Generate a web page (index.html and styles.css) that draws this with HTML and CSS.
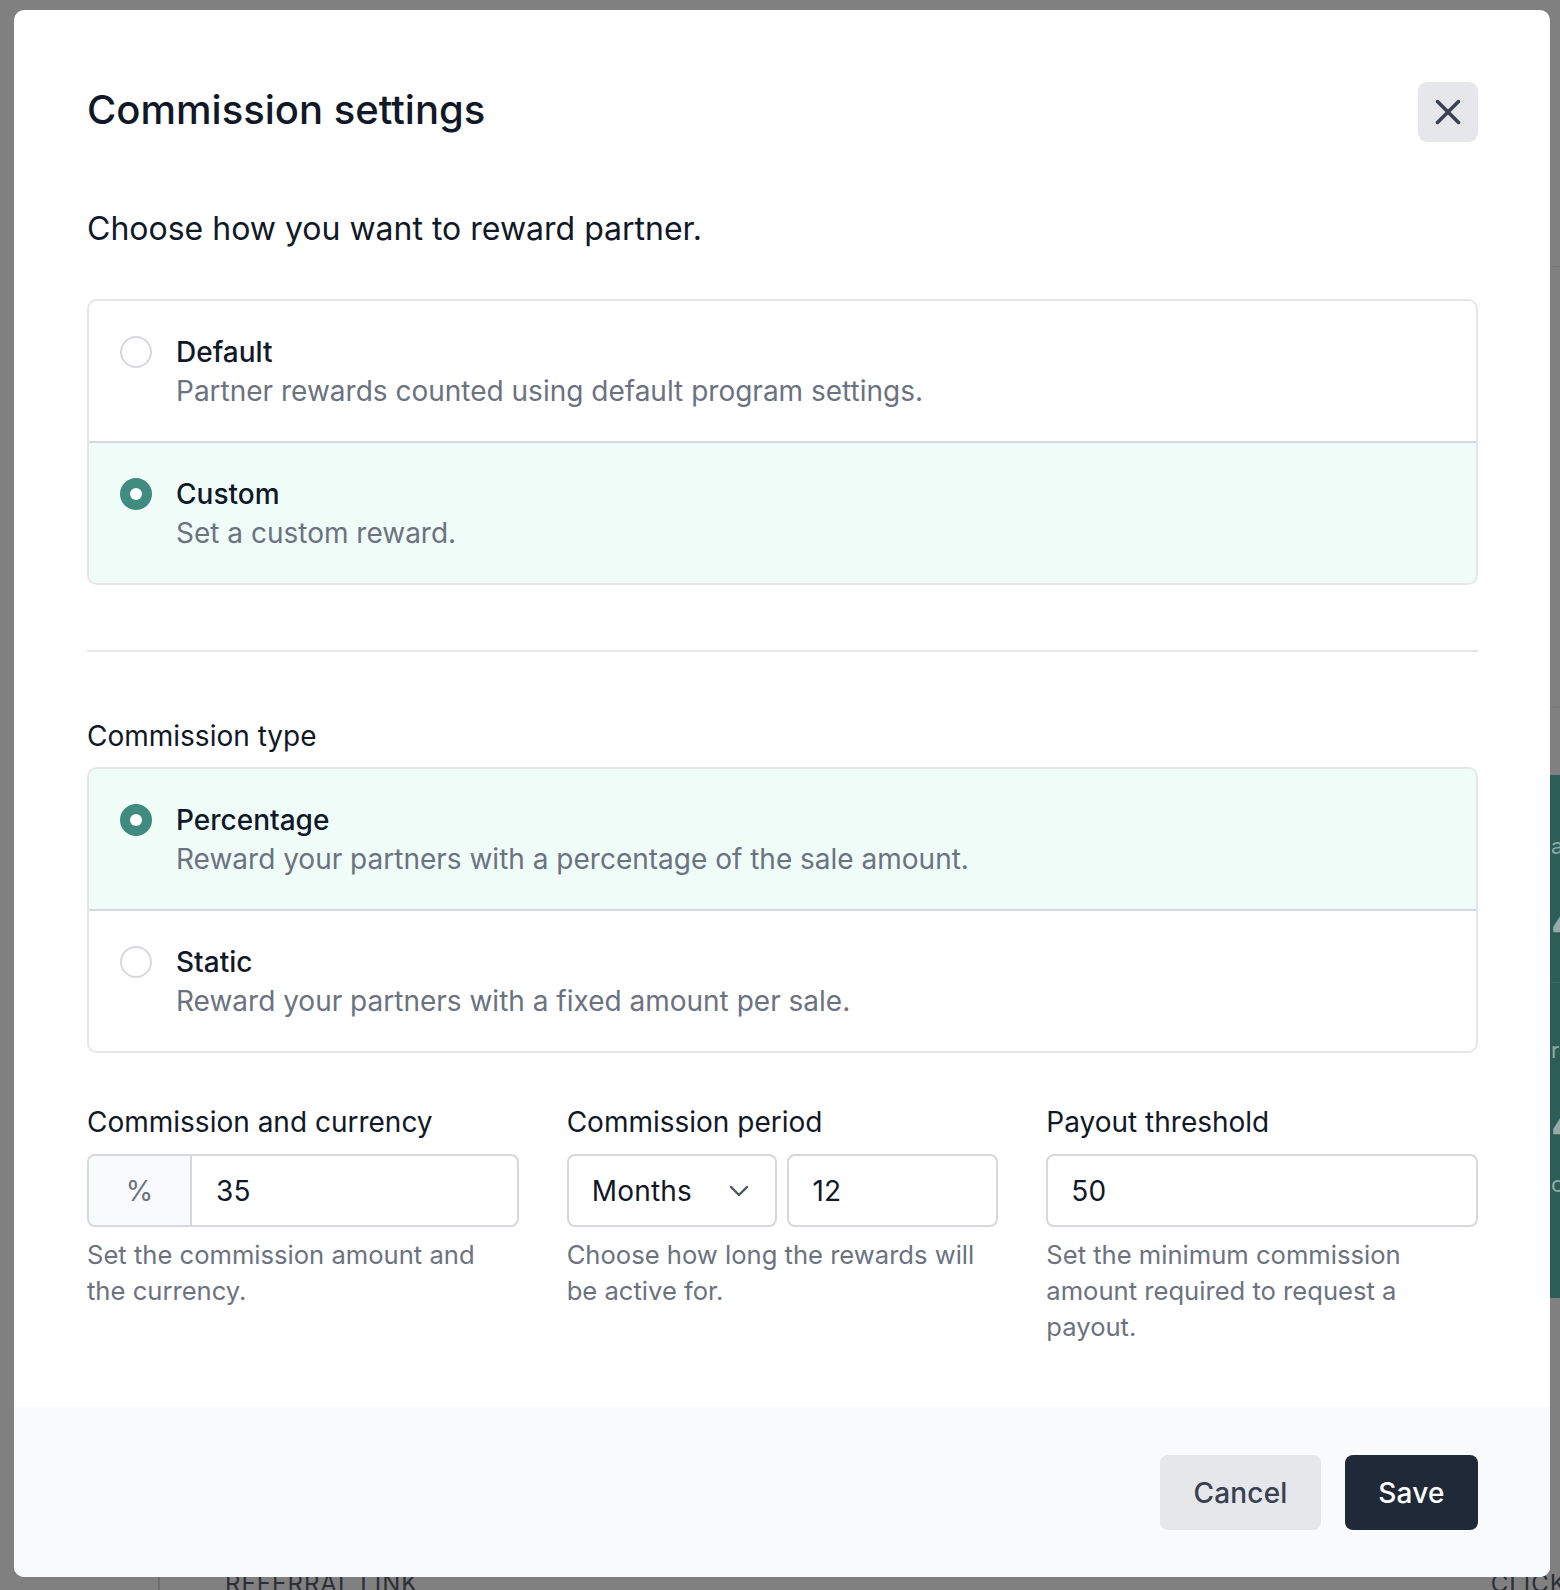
FILE: index.html
```html
<!DOCTYPE html>
<html lang="en">
<head>
<meta charset="utf-8">
<title>Commission settings</title>
<link rel="stylesheet" href="styles.css">
</head>
<body>
<div class="app">
  <main class="app-main">
    <div class="ref-head">
      <span class="ref-col">Referral link</span>
      <span class="ref-col ref-click">Clicks</span>
    </div>
  </main>
  <aside class="app-aside">
    <div class="aside-line aside-line-1"></div>
    <div class="aside-line aside-line-2"></div>
    <div class="stat-card">
      <div class="stat-label">avg</div>
      <div class="stat-value">4</div>
      <div class="stat-sep"></div>
      <div class="stat-label stat-label-2">rr</div>
      <div class="stat-value stat-value-2">4</div>
      <div class="stat-label stat-label-3">c</div>
    </div>
  </aside>
</div>

<div class="overlay">
  <div class="modal" role="dialog" aria-labelledby="modal-title">
    <div class="modal-body">
      <header class="modal-header">
        <h2 class="modal-title" id="modal-title">Commission settings</h2>
        <button class="close-btn" type="button" aria-label="Close">
          <svg width="26" height="26" viewBox="0 0 26 26" fill="none" stroke="#374151" stroke-width="3.5" stroke-linecap="round">
            <path d="M2.5 2.5 L23.5 23.5"/>
            <path d="M23.5 2.5 L2.5 23.5"/>
          </svg>
        </button>
      </header>

      <p class="intro">Choose how you want to reward partner.</p>

      <div class="choice-group">
        <div class="choice">
          <span class="radio"></span>
          <div class="choice-text">
            <div class="choice-title">Default</div>
            <div class="choice-desc">Partner rewards counted using default program settings.</div>
          </div>
        </div>
        <div class="choice is-selected">
          <span class="radio"></span>
          <div class="choice-text">
            <div class="choice-title">Custom</div>
            <div class="choice-desc">Set a custom reward.</div>
          </div>
        </div>
      </div>

      <hr class="divider">

      <div class="section-label">Commission type</div>

      <div class="choice-group choice-group-type">
        <div class="choice is-selected">
          <span class="radio"></span>
          <div class="choice-text">
            <div class="choice-title">Percentage</div>
            <div class="choice-desc">Reward your partners with a percentage of the sale amount.</div>
          </div>
        </div>
        <div class="choice">
          <span class="radio"></span>
          <div class="choice-text">
            <div class="choice-title">Static</div>
            <div class="choice-desc">Reward your partners with a fixed amount per sale.</div>
          </div>
        </div>
      </div>

      <div class="fields">
        <div class="field">
          <div class="field-label">Commission and currency</div>
          <div class="input input-prefixed">
            <span class="prefix">%</span>
            <span class="input-value">35</span>
          </div>
          <div class="field-help">Set the commission amount and the currency.</div>
        </div>
        <div class="field">
          <div class="field-label">Commission period</div>
          <div class="pair">
            <div class="input select">
              <span class="input-value">Months</span>
              <svg class="chevron" width="20" height="12" viewBox="0 0 20 12" fill="none" stroke="#4b5563" stroke-width="2.4" stroke-linecap="round" stroke-linejoin="round">
                <path d="M2 2 L10 10 L18 2"/>
              </svg>
            </div>
            <div class="input">
              <span class="input-value">12</span>
            </div>
          </div>
          <div class="field-help">Choose how long the rewards will be active for.</div>
        </div>
        <div class="field">
          <div class="field-label">Payout threshold</div>
          <div class="input">
            <span class="input-value">50</span>
          </div>
          <div class="field-help">Set the minimum commission amount required to request a payout.</div>
        </div>
      </div>
    </div>

    <footer class="modal-footer">
      <button class="btn btn-secondary" type="button">Cancel</button>
      <button class="btn btn-primary" type="button">Save</button>
    </footer>
  </div>
</div>
</body>
</html>
```

FILE: styles.css
```css
* {
  box-sizing: border-box;
}

html, body {
  margin: 0;
  padding: 0;
}

body {
  width: 1560px;
  height: 1590px;
  overflow: hidden;
  position: relative;
  background: #808080;
  font-family: Inter, "Noto Sans", sans-serif;
  color: #111827;
}

.app {
  display: flex;
  width: 1560px;
  height: 1590px;
  overflow: hidden;
}

.app-main {
  flex: 0 0 1550px;
  display: flex;
  flex-direction: column;
  justify-content: flex-end;
}

.ref-head {
  display: flex;
  justify-content: space-between;
  margin-left: 158px;
  height: 24px;
  border-left: 2px solid #6e6e6e;
  padding-left: 65px;
  margin-bottom: -6px;
}

.ref-col {
  font-size: 24px;
  line-height: 24px;
  letter-spacing: 1px;
  text-transform: uppercase;
  color: #2b2f36;
}

.ref-click {
  margin-right: -33px;
}

.app-aside {
  flex: 1 0 auto;
  min-width: 0;
  overflow: hidden;
  display: flex;
  flex-direction: column;
}

.aside-line {
  height: 1px;
  background: #767676;
  width: 200px;
}

.aside-line-1 {
  margin-top: 266px;
}

.aside-line-2 {
  margin-top: 440px;
}

.stat-card {
  margin-top: 67px;
  height: 523px;
  width: 300px;
  background: #2d5e56;
  padding-left: 1px;
  display: flex;
  flex-direction: column;
  color: #8ea9a2;
}

.stat-label {
  font-size: 22px;
  line-height: 30px;
  margin-top: 56px;
}

.stat-value {
  font-size: 44px;
  line-height: 50px;
  font-weight: 700;
  color: #9aa9a6;
  margin-top: 36px;
}

.stat-sep {
  height: 1px;
  background: #3d6b64;
  margin-top: 35px;
}

.stat-label-2 {
  margin-top: 52px;
}

.stat-value-2 {
  margin-top: 34px;
}

.stat-label-3 {
  margin-top: 20px;
}

/* ---------- overlay + modal ---------- */
.overlay {
  position: absolute;
  inset: 0;
  padding: 10px 0 0 14px;
}

.modal {
  width: 1536px;
  height: 1567px;
  background: #ffffff;
  border-radius: 10px;
  overflow: hidden;
  display: flex;
  flex-direction: column;
}

.modal-body {
  padding: 72px 72px 62px 73px;
  flex: 1 0 auto;
}

.modal-header {
  display: flex;
  justify-content: space-between;
  align-items: flex-start;
  height: 60px;
}

.modal-title {
  margin: -2px 0 0 0;
  font-size: 40px;
  line-height: 60px;
  font-weight: 500;
  color: #111827;
  letter-spacing: 0;
}

.close-btn {
  width: 60px;
  height: 60px;
  border: none;
  border-radius: 9px;
  background: #e5e7eb;
  display: flex;
  align-items: center;
  justify-content: center;
  padding: 0;
  margin-right: 0;
}

.intro {
  margin: 63px 0 0 0;
  font-size: 32px;
  line-height: 48px;
  color: #111827;
  letter-spacing: 0;
}

/* choices */
.choice-group {
  margin-top: 46px;
  border: 2px solid #e3e5e9;
  border-radius: 10px;
  overflow: hidden;
}

.choice {
  display: flex;
  align-items: flex-start;
  height: 140px;
  padding: 32px 31px 0 31px;
  background: #ffffff;
}

.choice + .choice {
  border-top: 2px solid #d4d7dc;
  height: 142px;
}

.choice.is-selected {
  background: #effcf8;
}

.radio {
  flex: 0 0 32px;
  width: 32px;
  height: 32px;
  margin-top: 3px;
  border-radius: 50%;
  border: 2px solid #d6d8dd;
  background: #ffffff;
  display: flex;
  align-items: center;
  justify-content: center;
}

.is-selected .radio {
  border: none;
  background: #3f8c7e;
}

.is-selected .radio::after {
  content: "";
  width: 12px;
  height: 12px;
  border-radius: 50%;
  background: #ffffff;
}

.choice-text {
  margin-left: 24px;
}

.choice-title {
  font-size: 28px;
  line-height: 39px;
  font-weight: 500;
  color: #111827;
  letter-spacing: 0;
}

.choice-desc {
  font-size: 28px;
  line-height: 39px;
  color: #6b7280;
  letter-spacing: 0;
}

.divider {
  margin: 65px 0 0 0;
  border: none;
  height: 2px;
  background: #e5e7eb;
}

.section-label {
  margin-top: 65px;
  font-size: 28px;
  line-height: 39px;
  color: #111827;
  letter-spacing: 0;
}

.choice-group-type {
  margin-top: 11px;
}

/* fields */
.fields {
  margin-top: 50px;
  display: grid;
  grid-template-columns: repeat(3, 1fr);
  column-gap: 48px;
}

.field-label {
  font-size: 28px;
  line-height: 39px;
  color: #111827;
  letter-spacing: 0;
}

.input {
  margin-top: 12px;
  height: 73px;
  border: 2px solid #d6d8dd;
  border-radius: 8px;
  display: flex;
  align-items: center;
  padding: 0 23px;
  background: #ffffff;
}

.input-value {
  font-size: 28px;
  line-height: 34px;
  color: #111827;
  letter-spacing: 0.2px;
}

.input-prefixed {
  padding: 0;
  overflow: hidden;
}

.prefix {
  flex: 0 0 103px;
  height: 100%;
  display: flex;
  align-items: center;
  justify-content: center;
  background: #f9fafb;
  border-right: 2px solid #d6d8dd;
  font-size: 28px;
  color: #6b7280;
  margin-right: 24px;
}

.pair {
  display: grid;
  grid-template-columns: 1fr 1fr;
  column-gap: 10px;
}

.select {
  justify-content: space-between;
  padding-right: 26px;
}

.chevron {
  display: block;
}

.field-help {
  margin-top: 10px;
  font-size: 25.6px;
  line-height: 36px;
  color: #6b7280;
  letter-spacing: 0;
}

/* footer */
.modal-footer {
  background: #f9fafb;
  height: 170px;
  padding: 48px 72px 0 0;
  display: flex;
  justify-content: flex-end;
  align-items: flex-start;
  gap: 24px;
}

.btn {
  height: 75px;
  border: none;
  border-radius: 8px;
  font-family: Inter, "Noto Sans", sans-serif;
  font-size: 28px;
  font-weight: 500;
  letter-spacing: 0.2px;
  padding: 0;
}

.btn-secondary {
  width: 161px;
  background: #e5e7eb;
  color: #374151;
}

.btn-primary {
  width: 133px;
  background: #1f2937;
  color: #ffffff;
}
```
